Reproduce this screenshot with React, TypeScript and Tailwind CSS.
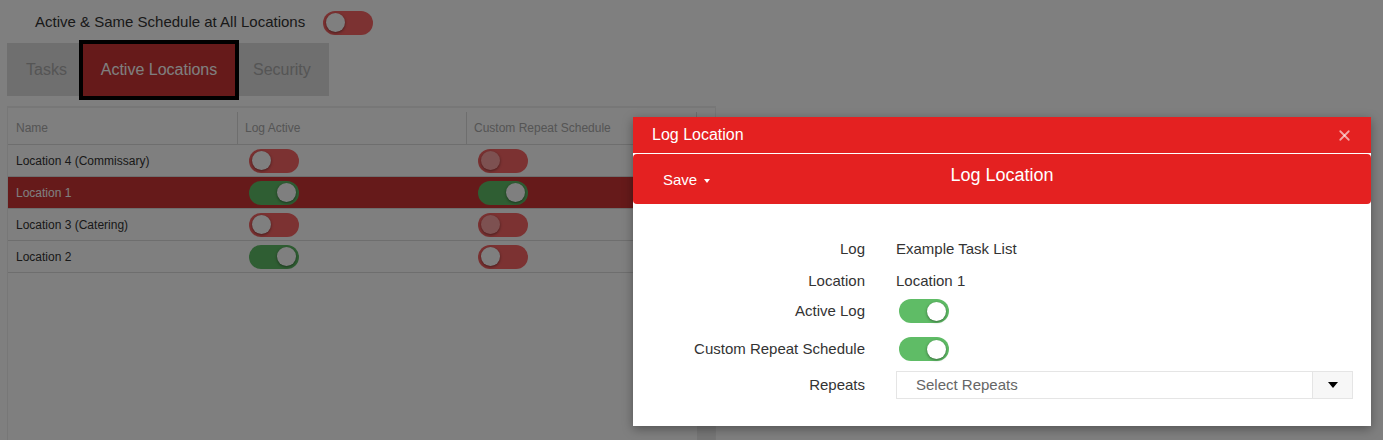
import { X } from 'lucide-react';

type ToggleProps = {
  on: boolean;
  faded?: boolean;
};

const Toggle = ({ on, faded }: ToggleProps) => (
  <div
    className={`flex h-[24px] w-[50px] shrink-0 items-center rounded-full px-[3px] ${
      on ? 'justify-end bg-[#5fbc66]' : 'justify-start bg-[#f86464]'
    }`}
  >
    <div
      className={`h-[19px] w-[19px] rounded-full shadow-[0_1px_3px_rgba(0,0,0,0.45)] ${
        faded ? 'bg-white/40' : 'bg-white'
      }`}
    />
  </div>
);

const rows = [
  { name: 'Location 4 (Commissary)', active: false, custom: false, fadedCustom: true, selected: false },
  { name: 'Location 1', active: true, custom: true, fadedCustom: false, selected: true },
  { name: 'Location 3 (Catering)', active: false, custom: false, fadedCustom: true, selected: false },
  { name: 'Location 2', active: true, custom: false, fadedCustom: false, selected: false },
];

export default function App() {
  return (
    <div className="relative h-[440px] w-[1383px] overflow-hidden bg-white font-['Liberation_Sans',Arial,sans-serif] text-[#333]">
      {/* page underneath the dialog */}
      <div className="flex h-full flex-col">
        <div className="flex h-[43px] items-center pl-[35px] pt-[2px]">
          <span className="text-[15px]">Active &amp; Same Schedule at All Locations</span>
          <div className="ml-[18px]">
            <Toggle on={false} />
          </div>
        </div>

        <div className="ml-[7px] flex h-[53px] w-[322px] items-start bg-[#dedede] text-[16px]">
          <div className="flex h-[53px] w-[72px] items-center pl-[19px] text-[#aaa]">Tasks</div>
          <div className="-mt-[3px] flex h-[60px] w-[160px] items-center justify-center border-4 border-black bg-[#cc3434] text-white">
            Active Locations
          </div>
          <div className="flex h-[53px] w-[90px] items-center pl-[14px] text-[#aaa]">Security</div>
        </div>

        <div className="ml-[7px] mt-[10px] flex w-[709px] flex-1 flex-col border-x border-t-2 border-[#eee] text-[12px]">
          <div className="flex h-[37px] border-b border-[#ddd] pt-[4px] text-[#aaa]">
            <div className="flex w-[230px] items-center border-r border-[#ddd] pl-[8px]">Name</div>
            <div className="flex w-[229px] items-center border-r border-[#ddd] pl-[7px]">Log Active</div>
            <div className="flex w-[230px] items-center border-r border-[#ddd] pl-[7px]">Custom Repeat Schedule</div>
            <div className="flex-1" />
          </div>
          <div className="flex flex-1">
            <div className="flex w-[689px] flex-col">
              {rows.map((r) => (
                <div
                  key={r.name}
                  className={`flex h-[32px] items-center border-b border-[#ddd] ${
                    r.selected ? 'bg-[#cc3434] text-white' : 'text-[#333]'
                  }`}
                >
                  <div className="w-[230px] pl-[8px]">{r.name}</div>
                  <div className="w-[229px] pl-[11px]">
                    <Toggle on={r.active} />
                  </div>
                  <div className="w-[230px] pl-[11px]">
                    <Toggle on={r.custom} faded={r.fadedCustom} />
                  </div>
                </div>
              ))}
            </div>
            <div className="flex-1 bg-[#ececec]" />
          </div>
        </div>
      </div>

      {/* backdrop */}
      <div className="absolute inset-0 bg-black/50" />

      {/* dialog */}
      <div className="absolute left-[633px] top-[117px] flex h-[309px] w-[738px] flex-col bg-white shadow-[0_3px_10px_rgba(0,0,0,0.35)]">
        <div className="flex h-[36px] items-center justify-between bg-[#e42121] pl-[19px] pr-[18px] text-[16px] text-white">
          <span>Log Location</span>
          <X size={17} strokeWidth={2.5} className="text-white/60" />
        </div>
        <div className="mt-[1px] flex h-[50px] items-start rounded-[4px] bg-[#e42121] text-white">
          <div className="flex w-[160px] items-center pl-[30px] pt-[15px] text-[15px]">
            Save
            <span className="ml-[7px] mt-[1px] h-0 w-0 border-x-[3px] border-t-[4px] border-x-transparent border-t-white" />
          </div>
          <div className="flex-1 pr-[160px] pt-[8px] text-center text-[18px]">Log Location</div>
        </div>

        <div className="flex flex-col pt-[29px] text-[15px]">
          <div className="flex h-[32px] items-center">
            <div className="w-[232px] text-right">Log</div>
            <div className="ml-[31px]">Example Task List</div>
          </div>
          <div className="flex h-[32px] items-center">
            <div className="w-[232px] text-right">Location</div>
            <div className="ml-[31px]">Location 1</div>
          </div>
          <div className="mt-[1px] flex h-[26px] items-center">
            <div className="w-[232px] text-right">Active Log</div>
            <div className="ml-[34px]">
              <Toggle on />
            </div>
          </div>
          <div className="mt-[12px] flex h-[26px] items-center">
            <div className="w-[232px] text-right">Custom Repeat Schedule</div>
            <div className="ml-[34px]">
              <Toggle on />
            </div>
          </div>
          <div className="mt-[9px] flex h-[28px] items-center">
            <div className="w-[232px] text-right">Repeats</div>
            <div className="ml-[31px] flex h-[28px] w-[457px] border border-[#e5e5e5]">
              <div className="flex flex-1 items-center pl-[19px] text-[#666]">Select Repeats</div>
              <div className="flex w-[40px] items-center justify-center border-l border-[#e5e5e5] bg-[#f7f7f7]">
                <span className="h-0 w-0 border-x-[5px] border-t-[6px] border-x-transparent border-t-black" />
              </div>
            </div>
          </div>
        </div>
      </div>
    </div>
  );
}
